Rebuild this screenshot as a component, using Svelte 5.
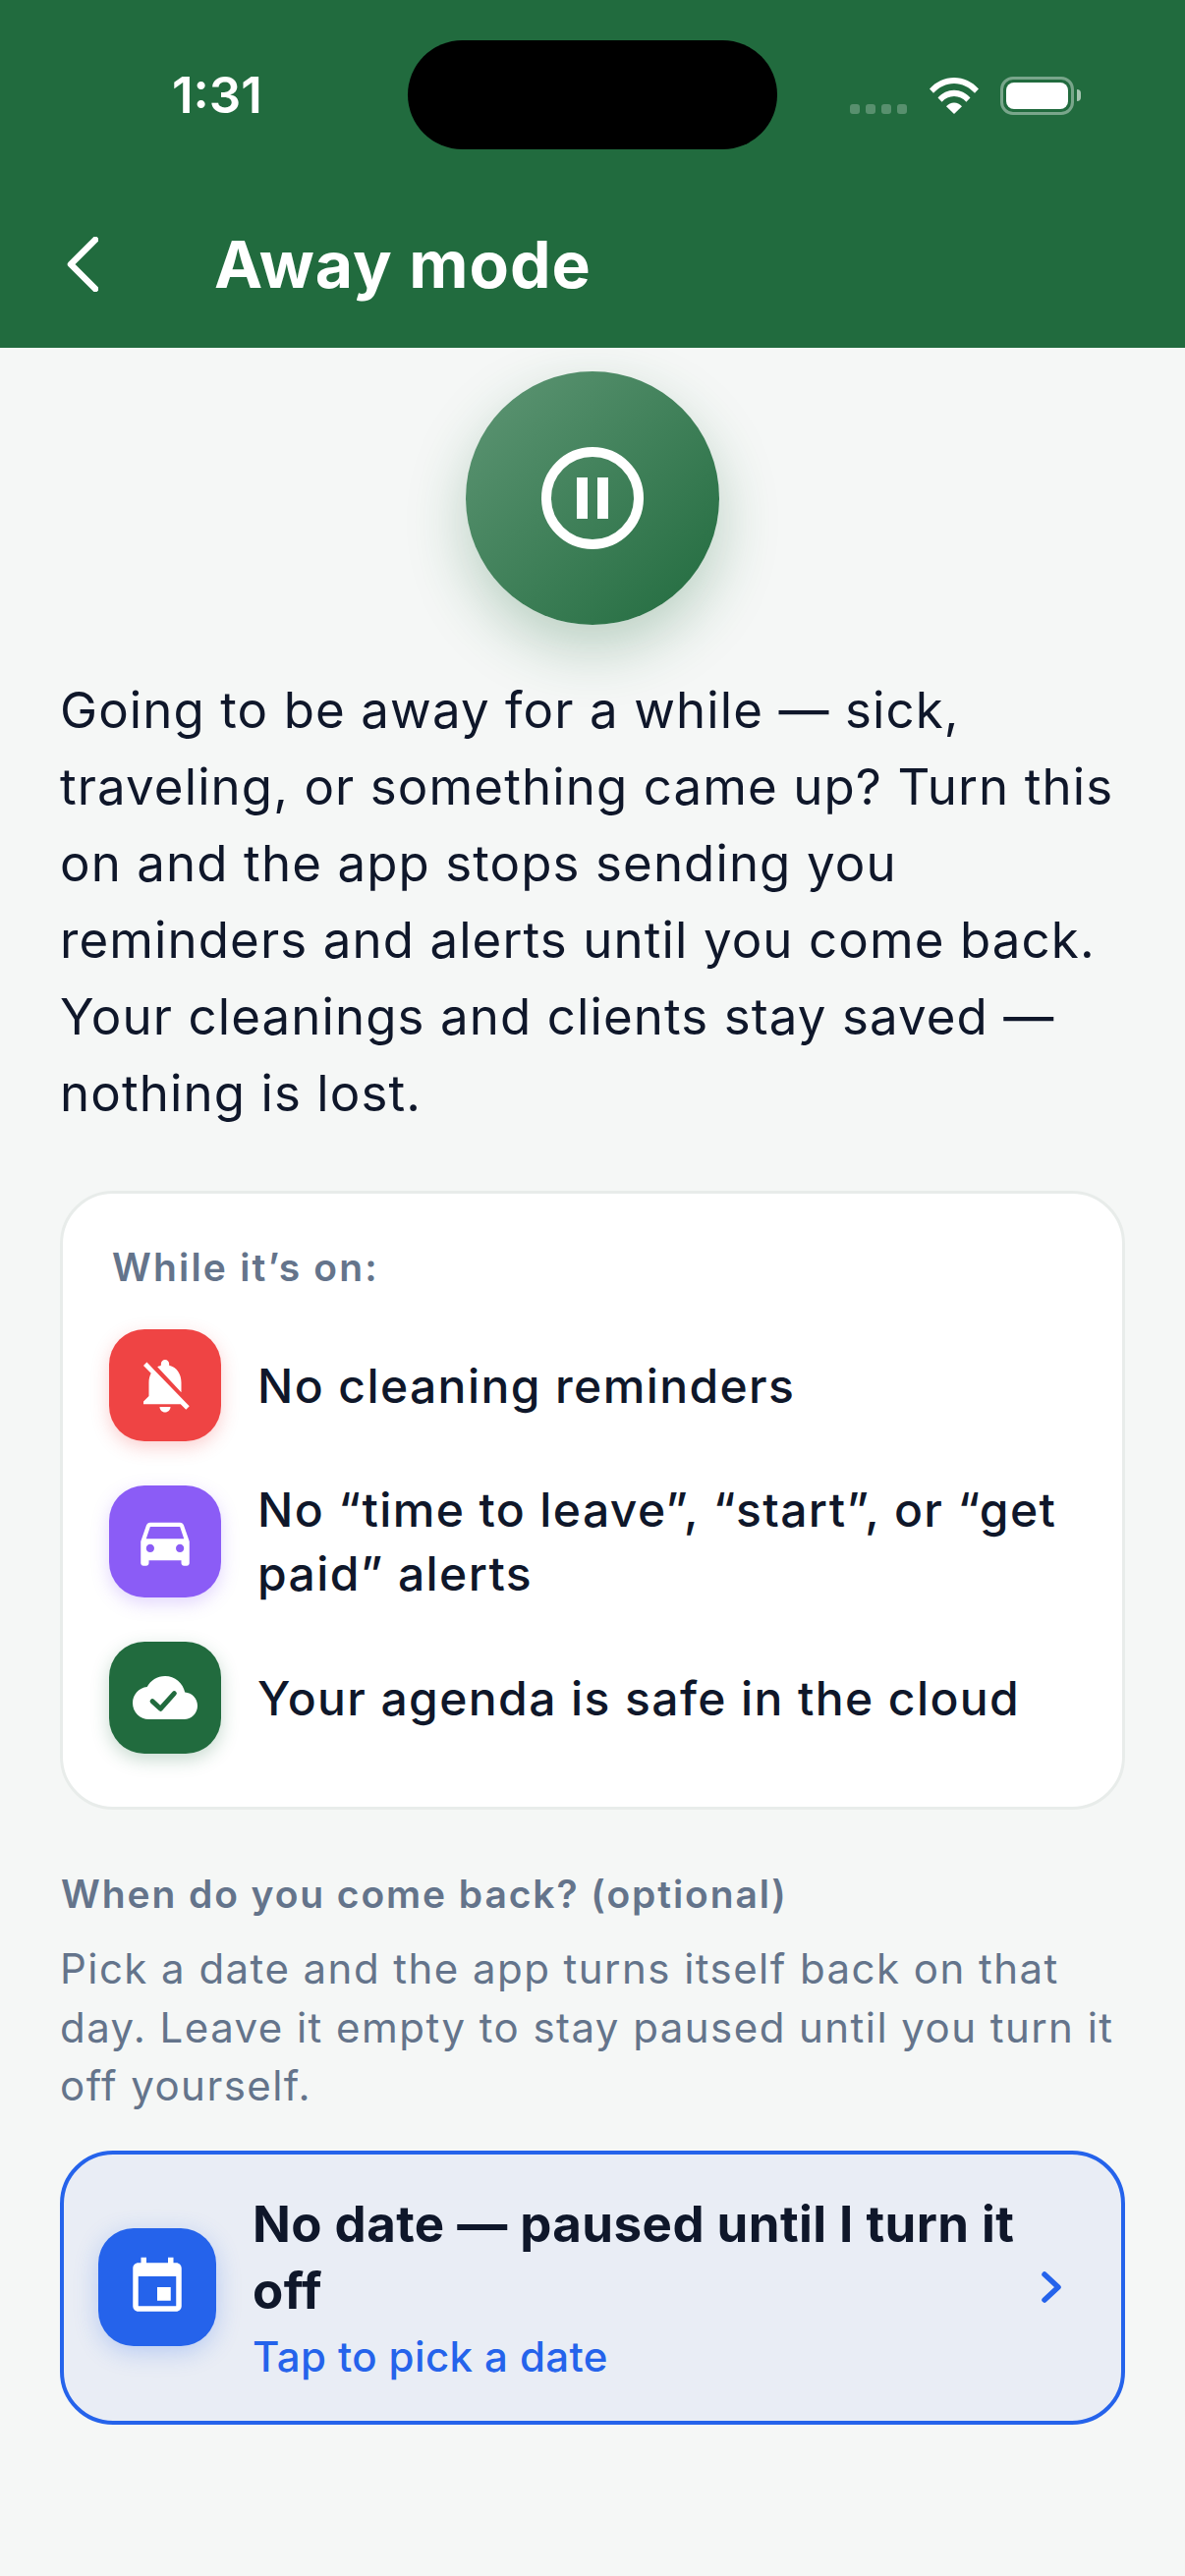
<script>
  const rows = [
    {
      text: "No cleaning reminders",
      tone: "red",
      d: "M20 18.69L7.84 6.14 5.27 3.49 4 4.76l2.8 2.8v.01c-.52.99-.8 2.16-.8 3.42v5l-2 2v1h13.73l2 2L21 19.72l-1-1.03zM12 22c1.11 0 2-.89 2-2h-4c0 1.11.89 2 2 2zm6-7.32V11c0-3.08-1.64-5.64-4.5-6.32V4c0-.83-.67-1.5-1.5-1.5s-1.5.67-1.5 1.5v.68c-.15.03-.29.08-.42.12-.1.03-.2.07-.3.11h-.01c-.2.08-.4.17-.59.27-.01 0-.01 0-.02.01L18 14.68z"
    },
    {
      text: "No “time to leave”, “start”, or “get paid” alerts",
      tone: "purple",
      d: "M18.92 6.01C18.72 5.42 18.16 5 17.5 5h-11c-.66 0-1.21.42-1.42 1.01L3 12v8c0 .55.45 1 1 1h1c.55 0 1-.45 1-1v-1h12v1c0 .55.45 1 1 1h1c.55 0 1-.45 1-1v-8l-2.08-5.99zM6.5 16c-.83 0-1.5-.67-1.5-1.5S5.67 13 6.5 13s1.5.67 1.5 1.5S7.33 16 6.5 16zm11 0c-.83 0-1.5-.67-1.5-1.5s.67-1.5 1.5-1.5 1.5.67 1.5 1.5-.67 1.5-1.5 1.5zM5 11l1.5-4.5h11L19 11H5z"
    },
    {
      text: "Your agenda is safe in the cloud",
      tone: "green",
      d: "M19.35 10.04C18.67 6.59 15.64 4 12 4 9.11 4 6.6 5.64 5.35 8.04 2.34 8.36 0 10.91 0 14c0 3.31 2.69 6 6 6h13c2.76 0 5-2.24 5-5 0-2.64-2.05-4.78-4.65-4.96z",
      check: true
    }
  ];
</script>

<div class="page">
  <header>
    <div class="notch"></div>
    <div class="status">
      <span class="time">1:31</span>
      <div class="status-right">
        <div class="dots"><i></i><i></i><i></i><i></i></div>
        <svg class="wifi" width="50" height="37" viewBox="0 0 50 37">
          <path d="M0 11.5C6.500 4.200 15.300 0 25 0s18.500 4.200 25 11.500l-4 4.300C40.500 9.800 33.200 6 25 6S9.500 9.800 4 15.800z" fill="#fff" />
          <path d="M8.500 20.500C12.800 15.700 18.600 12.800 25 12.800s12.200 2.900 16.500 7.700l-4.100 4.300C34.200 21.200 29.800 19 25 19s-9.200 2.200-12.400 5.800z" fill="#fff" />
          <path d="M17 29.300c2.100-2.300 5-3.700 8-3.700s5.900 1.400 8 3.700L25 37z" fill="#fff" />
        </svg>
        <div class="battery"><div class="level"></div></div>
        <div class="cap"></div>
      </div>
    </div>
    <div class="nav">
      <svg class="back" width="32" height="56" viewBox="0 0 32 56">
        <polyline points="29,3 4,28 29,53" fill="none" stroke="#fff" stroke-width="6.500" stroke-linecap="round" stroke-linejoin="round" />
      </svg>
      <h1>Away mode</h1>
    </div>
  </header>

  <main>
    <div class="hero">
      <svg width="104" height="104" viewBox="0 0 104 104">
        <circle cx="52" cy="52" r="47" fill="none" stroke="#fff" stroke-width="10" />
        <rect x="36" y="31" width="11" height="42" fill="#fff" />
        <rect x="57" y="31" width="11" height="42" fill="#fff" />
      </svg>
    </div>

    <p class="intro">Going to be away for a while — sick, traveling, or something came up? Turn this on and the app stops sending you reminders and alerts until you come back. Your cleanings and clients stay saved — nothing is lost.</p>

    <section class="card">
      <h2>While it’s on:</h2>
      <ul>
        {#each rows as row}
          <li>
            <span class="badge {row.tone}">
              <svg width="66" height="66" viewBox="0 0 24 24">
                <path d={row.d} fill="#fff" />
                {#if row.check}
                  <polyline points="7.300,13.300 10.300,16.100 15.400,10.400" fill="none" stroke="#216b3e" stroke-width="1.800" stroke-linecap="round" stroke-linejoin="round" />
                {/if}
              </svg>
            </span>
            <span class="row-text">{row.text}</span>
          </li>
        {/each}
      </ul>
    </section>

    <h3>When do you come back? (optional)</h3>
    <p class="hint">Pick a date and the app turns itself back on that day. Leave it empty to stay paused until you turn it off yourself.</p>

    <button class="picker">
      <span class="badge blue">
        <svg width="66" height="66" viewBox="0 0 24 24">
          <path d="M17 12h-5v5h5v-5zM16 1v2H8V1H6v2H5c-1.110 0-1.990.9-1.990 2L3 19c0 1.100.89 2 2 2h14c1.100 0 2-.9 2-2V5c0-1.100-.9-2-2-2h-1V1h-2zm3 18H5V8h14v11z" fill="#fff" />
        </svg>
      </span>
      <span class="picker-text">
        <strong>No date — paused until I turn it off</strong>
        <small>Tap to pick a date</small>
      </span>
      <svg class="chevron" width="24" height="36" viewBox="0 0 24 36">
        <polyline points="4,5 18,18 4,31" fill="none" stroke="#2563eb" stroke-width="5.500" stroke-linecap="round" stroke-linejoin="round" />
      </svg>
    </button>
  </main>
</div>

<style>
  :global(body) {
    margin: 0;
    background: #f5f7f6;
  }

  .page {
    min-height: 2622px;
    background: #f5f7f6;
    font-family: Inter, "Noto Sans", sans-serif;
    color: #0f172a;
  }

  header {
    position: relative;
    height: 354px;
    background: #216b3e;
    color: #fff;
  }

  .notch {
    position: absolute;
    left: 415px;
    top: 41px;
    width: 376px;
    height: 111px;
    border-radius: 56px;
    background: #000;
  }

  .status {
    height: 194px;
    display: flex;
    align-items: flex-start;
    justify-content: space-between;
    padding: 0 106px 0 175px;
    box-sizing: border-box;
  }

  .time {
    margin-top: 69px;
    font-size: 51px;
    line-height: 56px;
    font-weight: 600;
  }

  .status-right {
    display: flex;
    align-items: flex-start;
    margin-top: 78px;
  }

  .dots {
    display: flex;
    gap: 6px;
    margin-top: 28px;
    margin-right: 23px;
  }

  .dots i {
    width: 10px;
    height: 10px;
    border-radius: 3px;
    background: rgba(255, 255, 255, 0.25);
  }

  .wifi {
    margin-top: 1px;
    margin-right: 22px;
  }

  .battery {
    width: 75px;
    height: 39px;
    box-sizing: border-box;
    padding: 3px;
    border: 3px solid rgba(255, 255, 255, 0.4);
    border-radius: 13px;
  }

  .level {
    height: 100%;
    border-radius: 8px;
    background: #fff;
  }

  .cap {
    width: 4px;
    height: 12px;
    margin: 13px 0 0 3px;
    border-radius: 0 4px 4px 0;
    background: rgba(255, 255, 255, 0.6);
  }

  .nav {
    height: 160px;
    display: flex;
    align-items: center;
    padding-left: 68px;
    padding-bottom: 10px;
    box-sizing: border-box;
  }

  .back {
    margin-right: 118px;
  }

  h1 {
    margin: 0;
    font-size: 66px;
    line-height: 72px;
    font-weight: 700;
    letter-spacing: 1px;
  }

  main {
    padding: 24px 61px 0;
  }

  .hero {
    width: 258px;
    height: 258px;
    margin: 0 auto 48px;
    border-radius: 50%;
    display: flex;
    align-items: center;
    justify-content: center;
    background: linear-gradient(135deg, #5f9675, #216b3e);
    box-shadow: 0 24px 60px rgba(33, 107, 62, 0.28);
  }

  .intro {
    margin: 0 0 60px;
    font-size: 51px;
    line-height: 78px;
    letter-spacing: 1.1px;
    color: #0f172a;
  }

  .card {
    height: 630px;
    box-sizing: border-box;
    padding: 53px 47px 0;
    background: #fff;
    border: 3px solid #e8ecea;
    border-radius: 54px;
  }

  h2 {
    margin: 0 0 41px 3px;
    font-size: 39px;
    line-height: 44px;
    font-weight: 600;
    letter-spacing: 2.2px;
    color: #64748b;
  }

  ul {
    list-style: none;
    margin: 0;
    padding: 0;
    display: flex;
    flex-direction: column;
    gap: 37px;
  }

  li {
    display: flex;
    align-items: center;
    gap: 37px;
  }

  .badge {
    flex: none;
    width: 114px;
    height: 114px;
    border-radius: 36px;
    display: flex;
    align-items: center;
    justify-content: center;
  }

  .red {
    background: #ef4444;
    box-shadow: 0 6px 18px rgba(239, 68, 68, 0.25);
  }

  .purple {
    background: #8b5cf6;
    box-shadow: 0 6px 18px rgba(139, 92, 246, 0.25);
  }

  .green {
    background: #216b3e;
    box-shadow: 0 6px 18px rgba(33, 107, 62, 0.25);
  }

  .row-text {
    font-size: 48px;
    line-height: 65px;
    font-weight: 470;
    letter-spacing: 1.4px;
  }

  h3 {
    margin: 64px 0 0 1px;
    font-size: 39px;
    line-height: 44px;
    font-weight: 600;
    letter-spacing: 1.9px;
    color: #64748b;
  }

  .hint {
    margin: 24px 0 36px;
    font-size: 42px;
    line-height: 59.500px;
    letter-spacing: 1.45px;
    color: #64748b;
  }

  .picker {
    width: 100%;
    height: 279px;
    box-sizing: border-box;
    display: flex;
    align-items: center;
    padding: 0 58px 0 35px;
    background: #e9edf5;
    border: 4px solid #2563eb;
    border-radius: 54px;
    font: inherit;
    color: inherit;
    text-align: left;
  }

  .blue {
    width: 120px;
    height: 120px;
    background: #2563eb;
    box-shadow: 0 6px 24px rgba(37, 99, 235, 0.25);
  }

  .picker-text {
    flex: 1;
    margin-left: 37px;
    display: flex;
    flex-direction: column;
  }

  strong {
    font-size: 51px;
    line-height: 68px;
    font-weight: 650;
    letter-spacing: 0.45px;
  }

  small {
    margin-top: 6px;
    font-size: 42px;
    line-height: 54px;
    font-weight: 500;
    letter-spacing: 0.4px;
    color: #2563eb;
  }

  .chevron {
    flex: none;
    margin-left: 20px;
  }
</style>
